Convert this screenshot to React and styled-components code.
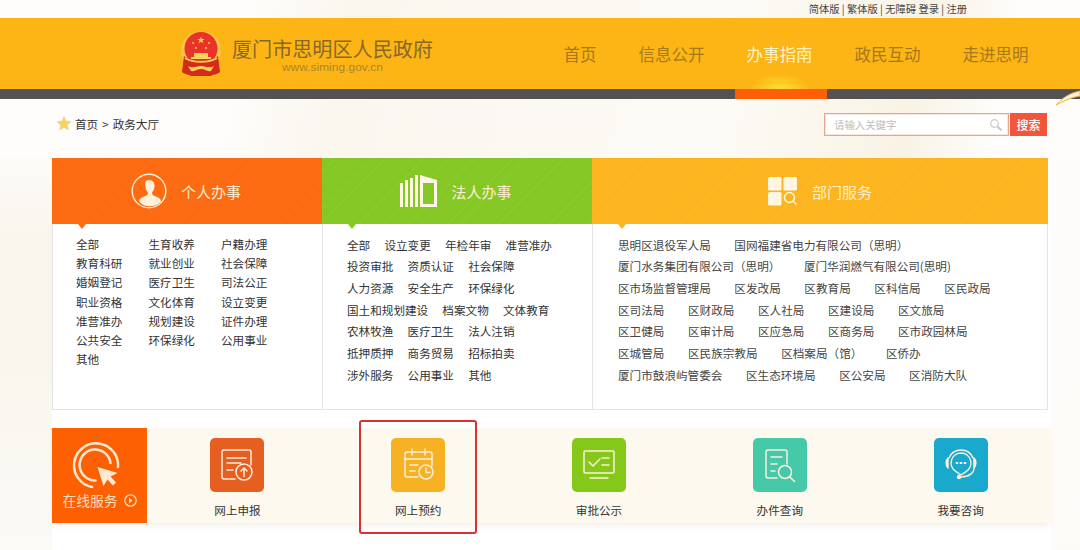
import React from 'react';
import styled, { createGlobalStyle } from 'styled-components';

const GlobalStyle = createGlobalStyle`
  html, body {
    margin: 0;
    padding: 0;
    height: 550px;
    overflow: hidden;
    background: #fff;
  }
  body {
    font-family: "Noto Sans CJK SC", "Liberation Sans", sans-serif;
    color: #333;
  }
`;

const Page = styled.div`
  position: relative;
  width: 1080px;
  height: 550px;
  overflow: hidden;
  background:
    linear-gradient(102deg, #fefdfb 22%, #fbf6ee 32%, #fdfbf6 66%, #f9f3e6 84%, #fefdfb 92%) 0 0 / 100% 158px no-repeat,
    linear-gradient(#fdfbf7, #f9f5ec 22%, #f9f6ee 55%, #fcfaf6) 0 158px / 52px 392px no-repeat,
    linear-gradient(#fdfcfa, #fcfbf8) 1051px 158px / 29px 392px no-repeat,
    #fff;
`;

const Swoosh = styled.svg`
  position: absolute;
  top: 90px;
  right: 0;
`;

const TopBar = styled.div`
  display: flex;
  justify-content: flex-end;
  align-items: center;
  height: 18px;
  padding-right: 113px;
  font-size: 10.3px;
  line-height: 16px;
  color: #444;
  white-space: pre;
`;

const Header = styled.header`
  display: flex;
  justify-content: space-between;
  height: 71px;
  padding: 0 51.5px 0 180px;
  background: #fdb515;
`;

const Logo = styled.div`
  display: flex;
  align-items: center;
  gap: 10px;
`;

const LogoText = styled.div`
  display: flex;
  flex-direction: column;
  align-items: center;
  padding-top: 3px;
`;

const Title = styled.div`
  font-size: 20.1px;
  line-height: 24px;
  color: #86692a;
  white-space: nowrap;
`;

const Url = styled.div`
  font-family: "Liberation Sans", sans-serif;
  font-size: 11.8px;
  line-height: 12px;
  letter-spacing: 0.1px;
  color: #a8862f;
`;

const Nav = styled.nav`
  display: flex;
  gap: 42px;
`;

const NavItem = styled.a`
  position: relative;
  display: flex;
  align-items: center;
  font-size: 16.5px;
  color: ${(p) => (p.$active ? '#fff2c9' : '#a5791c')};
  &::before {
    content: ${(p) => (p.$active ? "''" : 'none')};
    position: absolute;
    left: 2px;
    right: 2px;
    bottom: 0;
    height: 15px;
    background: radial-gradient(ellipse at 50% 100%, #ffe02c 0, rgba(255, 224, 44, 0) 70%);
  }
  &::after {
    content: ${(p) => (p.$active ? "''" : 'none')};
    position: absolute;
    left: -12px;
    right: -14px;
    bottom: -10px;
    height: 10px;
    background: #fc5f05;
  }
`;

const DarkBar = styled.div`
  height: 10px;
  background: #545252;
`;

const Main = styled.main`
  padding: 0 29px 0 52px;
`;

const CrumbRow = styled.div`
  display: flex;
  justify-content: space-between;
  align-items: center;
  height: 23px;
  padding: 14px 4px 22px 5px;
`;

const Crumbs = styled.div`
  display: flex;
  align-items: center;
  gap: 4px;
  margin-top: -2px;
  font-size: 11.6px;
  color: #333;
`;

const Search = styled.div`
  display: flex;
  gap: 1px;
`;

const SearchBox = styled.div`
  box-sizing: border-box;
  display: flex;
  justify-content: space-between;
  align-items: center;
  width: 185px;
  height: 23px;
  padding: 0 5px 0 9px;
  background: #fff;
  border: 1px solid #e5a58e;
  box-shadow: inset 0 0 0 1px #f8e6de;
  font-size: 10.4px;
  color: #bdbdbd;
`;

const SearchButton = styled.button`
  width: 37px;
  height: 23px;
  padding: 0;
  border: 0;
  background: #f4553a;
  color: #fff;
  font-family: inherit;
  font-size: 12px;
  font-weight: 500;
`;

const Panel = styled.section`
  display: grid;
  grid-template-columns: 270px 270px 456px;
  height: 252px;
`;

const Column = styled.div`
  display: flex;
  flex-direction: column;
  background: #fff;
  border: 1px solid #e3e3e3;
  border-width: 0 ${(p) => (p.$last ? '1px' : '0')} 1px ${(p) => (p.$first ? '1px' : '0')};
  box-sizing: border-box;
  & + & {
    border-left: 1px solid #e3e3e3;
  }
`;

const ColumnHead = styled.div`
  position: relative;
  flex: none;
  display: flex;
  justify-content: center;
  align-items: center;
  gap: 14px;
  height: 66px;
  padding-right: ${(p) => (p.$last ? '0' : '2px')};
  margin: 0 ${(p) => (p.$last ? '-1px' : '0')} 0 -1px;
  background:
    repeating-linear-gradient(135deg, rgba(255, 255, 255, 0.035) 0 1px, transparent 1px 9px),
    ${(p) => p.$color};
  font-size: 15px;
  color: #ffedcf;
  &::after {
    content: '';
    position: absolute;
    left: 26px;
    top: 100%;
    border: 4px solid transparent;
    border-top: 5px solid ${(p) => p.$color};
    border-bottom: 0;
  }
`;

const GridList = styled.div`
  display: grid;
  grid-template-columns: repeat(3, 72.5px);
  grid-auto-rows: 19.2px;
  padding: 11px 0 0 23px;
  font-size: 11.6px;
  line-height: 19.2px;
  color: #333;
`;

const RowList = styled.div`
  padding: 10.5px 0 0 ${(p) => p.$left}px;
  font-size: 11.6px;
  line-height: 21.7px;
  color: ${(p) => p.$color};
`;

const ListRow = styled.div`
  display: flex;
  gap: ${(p) => p.$gap}px;
  height: 21.7px;
  white-space: nowrap;
`;

const Services = styled.section`
  display: flex;
  width: 999px;
  height: 95px;
  margin-top: 18px;
  background: #fdf9ee;
  box-shadow: 0 5px 6px -2px rgba(120, 110, 90, 0.1);
`;

const ServiceBadge = styled.div`
  box-sizing: border-box;
  flex: none;
  display: flex;
  flex-direction: column;
  align-items: center;
  width: 95px;
  padding-top: 14px;
  background: #fc6000;
  color: #ffdcbc;
  font-size: 13.8px;
  line-height: 20px;
`;

const BadgeLabel = styled.div`
  display: flex;
  align-items: center;
  gap: 6px;
  margin-top: 2px;
  white-space: nowrap;
`;

const ServiceGrid = styled.div`
  flex: 1;
  display: grid;
  grid-template-columns: repeat(5, 1fr);
`;

const ServiceItem = styled.a`
  position: relative;
  display: flex;
  flex-direction: column;
  align-items: center;
  padding-top: 10px;
  font-size: 11.6px;
  line-height: 16px;
  color: #333;
  &::after {
    content: ${(p) => (p.$marked ? "''" : 'none')};
    position: absolute;
    top: -8px;
    left: 31px;
    right: 32px;
    bottom: -11px;
    border: 2px solid #d8322f;
    border-radius: 3px;
  }
`;

const Tile = styled.div`
  display: flex;
  justify-content: center;
  align-items: center;
  width: 54px;
  height: 54px;
  margin-bottom: 10px;
  border-radius: 5px;
  background: ${(p) => p.$color};
`;

const Emblem = () => (
  <svg width="42" height="46" viewBox="0 0 42 46">
    <circle cx="21" cy="20" r="20" fill="#f8c445" />
    <circle cx="21" cy="17.500" r="16.500" fill="#e8322a" />
    <path d="M21 5.500l.9 2.600h2.700l-2.200 1.600.9 2.700-2.300-1.700-2.300 1.700.9-2.700-2.200-1.600h2.700z" fill="#f9d448" />
    <circle cx="13" cy="12" r="1" fill="#f9d448" />
    <circle cx="29" cy="12" r="1" fill="#f9d448" />
    <circle cx="16" cy="17" r="1" fill="#f9d448" />
    <circle cx="26" cy="17" r="1" fill="#f9d448" />
    <path d="M11 26h20v2H11zM14 22h14v4H14z" fill="#f8d458" />
    <path d="M4 25c5 5 29 5 34 0l2 16c-3 3-7 2-9 4H11c-2-2-6-1-9-4z" fill="#d42a1c" />
    <path d="M8 35c6 3 8 0 13 0s7 3 13 0l-3 5c-4 1-6-2-10-2s-6 3-10 2z" fill="#f7cf58" />
    <path d="M5 27c8 5 24 5 32 0" fill="none" stroke="#f7cf58" strokeWidth="2" />
  </svg>
);

const Star = () => (
  <svg width="14" height="15" viewBox="0 0 14 15">
    <path d="M7 .5l2 4.600 5 .5-3.700 3.400 1 5L7 11.500 2.700 14l1-5L0 5.600l5-.5z" fill="#f9d35d" stroke="#e8c89a" strokeWidth=".5" />
  </svg>
);

const Magnifier = () => (
  <svg width="14" height="14" viewBox="0 0 14 14" fill="none" stroke="#c9c9c9">
    <circle cx="5.500" cy="5.500" r="3.800" strokeWidth="1.200" />
    <path d="M8.500 8.500l4 4" strokeWidth="2.200" />
  </svg>
);

const PersonIcon = () => (
  <svg width="36" height="36" viewBox="0 0 36 36">
    <circle cx="18" cy="18" r="16.800" fill="none" stroke="#fff1dc" strokeWidth="1.400" />
    <path d="M18 7c3.800 0 5.800 2.900 5.500 6.500-.2 2.400-1 4.200-2.300 5.600-.3 1.600 0 2.700 1.300 3.300 2.300 1 5.300 1.700 6.600 3.700.5.700.7 1.500.8 2.300A15.500 15.500 0 0 1 18 33.300 15.500 15.500 0 0 1 8.100 28.400c.1-.8.3-1.600.8-2.300 1.300-2 4.300-2.700 6.600-3.700 1.300-.6 1.600-1.700 1.300-3.300-1.300-1.400-2.100-3.200-2.300-5.600C14.200 9.900 14.200 7 18 7z" fill="#fff1dc" />
  </svg>
);

const HallIcon = () => (
  <svg width="37" height="32" viewBox="0 0 37 32" fill="#fff6e6">
    <rect x="0" y="8" width="3" height="24" />
    <rect x="5" y="5" width="3" height="27" />
    <rect x="10" y="3" width="3" height="29" />
    <rect x="15" y="0" width="3" height="32" />
    <path d="M20 0l17 5v27H20zM23 8v21h11V8z" fillRule="evenodd" />
  </svg>
);

const DeptIcon = () => (
  <svg width="30" height="30" viewBox="0 0 30 30">
    <rect x="0" y="1" width="13.500" height="13.500" rx="1.500" fill="#fff6e2" />
    <rect x="15.500" y="1" width="13.500" height="13.500" rx="1.500" fill="#fff6e2" />
    <rect x="0" y="16" width="13.500" height="13.500" rx="1.500" fill="#fff6e2" />
    <circle cx="21.500" cy="21.500" r="5" fill="none" stroke="#fff6e2" strokeWidth="1.500" />
    <path d="M25 25l3.500 3.500" stroke="#fff6e2" strokeWidth="1.500" />
  </svg>
);

const ClickIcon = () => (
  <svg width="56" height="46" viewBox="0 0 56 46" fill="none" stroke="#ffe9d2" strokeWidth="2.500" strokeLinecap="round">
    <path d="M46 25A22 22 0 1 0 20 45" />
    <path d="M38.500 21A15.500 15.500 0 1 0 23.500 38.500" />
    <path d="M25.500 25L45.500 31L38.500 34.500L44 40.500L41 43.500L35.500 37.500L31.500 44Z" fill="#ffe9d2" stroke="none" />
  </svg>
);

const CircleArrow = () => (
  <svg width="13" height="13" viewBox="0 0 13 13" fill="none">
    <circle cx="6.500" cy="6.500" r="5.700" stroke="#ffdcbc" strokeWidth="1.200" />
    <path d="M5 3.500l3.500 3-3.500 3z" fill="#ffdcbc" />
  </svg>
);

const IconSvg = styled.svg`
  width: 36px;
  height: 36px;
  fill: none;
  stroke: #fdeedd;
  stroke-width: 1.500;
  stroke-linecap: round;
  stroke-linejoin: round;
`;

const ReportIcon = () => (
  <IconSvg viewBox="0 0 36 36">
    <path d="M16 32H5a2 2 0 0 1-2-2V5a2 2 0 0 1 2-2h25a2 2 0 0 1 2 2v13" />
    <path d="M8 11h19M8 16h14M8 23h6" />
    <circle cx="25" cy="25" r="8" />
    <path d="M25 29.500v-8M22 24l3-3 3 3" />
  </IconSvg>
);

const BookingIcon = () => (
  <IconSvg viewBox="0 0 36 36">
    <path d="M18 30H7a2 2 0 0 1-2-2V7a2 2 0 0 1 2-2h23a2 2 0 0 1 2 2v12" />
    <path d="M5 12h27M12 2v6M25 2v6M10 18h8M10 24h5" />
    <circle cx="26" cy="25" r="7" />
    <path d="M26 21v4.500h4" />
  </IconSvg>
);

const ApprovalIcon = () => (
  <IconSvg viewBox="0 0 36 36">
    <rect x="3" y="4" width="30" height="22" rx="1" />
    <path d="M8 15l4 4 7-7M21 11h7M21 18h7M9 31h18" />
  </IconSvg>
);

const QueryIcon = () => (
  <IconSvg viewBox="0 0 36 36">
    <path d="M15 31H6a2 2 0 0 1-2-2V5a2 2 0 0 1 2-2h17a2 2 0 0 1 2 2v12" />
    <path d="M9 10h11M9 17h6M9 24h4" />
    <circle cx="23" cy="25" r="6.500" />
    <path d="M28 30l4.500 4.500" />
  </IconSvg>
);

const ConsultIcon = () => (
  <IconSvg viewBox="0 0 36 36">
    <path d="M6 11a13 13 0 0 1 24 0" />
    <path d="M18 6a10 10 0 0 1 5 18.600L18 28l-5-3.400A10 10 0 0 1 18 6z" />
    <path d="M13.500 16h1M17.500 16h1M21.500 16h1" strokeWidth="2" />
    <path d="M5 11c-2.500 2.500-2.500 7 0 10zM31 11c2.500 2.500 2.500 7 0 10z" fill="#fdeedd" />
    <path d="M31 21c0 5-5 9-13 9" />
    <circle cx="16" cy="30" r="1.500" fill="#fdeedd" />
  </IconSvg>
);

const personal = [
  '全部', '生育收养', '户籍办理',
  '教育科研', '就业创业', '社会保障',
  '婚姻登记', '医疗卫生', '司法公正',
  '职业资格', '文化体育', '设立变更',
  '准营准办', '规划建设', '证件办理',
  '公共安全', '环保绿化', '公用事业',
  '其他',
];

const legal = [
  ['全部', '设立变更', '年检年审', '准营准办'],
  ['投资审批', '资质认证', '社会保障'],
  ['人力资源', '安全生产', '环保绿化'],
  ['国土和规划建设', '档案文物', '文体教育'],
  ['农林牧渔', '医疗卫生', '法人注销'],
  ['抵押质押', '商务贸易', '招标拍卖'],
  ['涉外服务', '公用事业', '其他'],
];

const departments = [
  ['思明区退役军人局', '国网福建省电力有限公司（思明）'],
  ['厦门水务集团有限公司（思明）', '厦门华润燃气有限公司(思明)'],
  ['区市场监督管理局', '区发改局', '区教育局', '区科信局', '区民政局'],
  ['区司法局', '区财政局', '区人社局', '区建设局', '区文旅局'],
  ['区卫健局', '区审计局', '区应急局', '区商务局', '区市政园林局'],
  ['区城管局', '区民族宗教局', '区档案局（馆）', '区侨办'],
  ['厦门市鼓浪屿管委会', '区生态环境局', '区公安局', '区消防大队'],
];

const services = [
  { label: '网上申报', color: '#e65e20', Icon: ReportIcon },
  { label: '网上预约', color: '#f6b223', Icon: BookingIcon, marked: true },
  { label: '审批公示', color: '#86c81a', Icon: ApprovalIcon },
  { label: '办件查询', color: '#46c9a8', Icon: QueryIcon },
  { label: '我要咨询', color: '#19a9cc', Icon: ConsultIcon },
];

const navItems = ['首页', '信息公开', '办事指南', '政民互动', '走进思明'];

const App = () => (
  <Page>
    <GlobalStyle />
    <Swoosh width="24" height="18" viewBox="0 0 24 18">
      <path d="M0 15C6 8 14 3 24 1v5C16 7 8 11 0 15z" fill="#fdf3dc" stroke="#ecb648" strokeWidth="1" />
    </Swoosh>
    <TopBar>简体版 | 繁体版 | 无障碍 登录 | 注册</TopBar>
    <Header>
      <Logo>
        <Emblem />
        <LogoText>
          <Title>厦门市思明区人民政府</Title>
          <Url>www.siming.gov.cn</Url>
        </LogoText>
      </Logo>
      <Nav>
        {navItems.map((item) => (
          <NavItem key={item} $active={item === '办事指南'}>{item}</NavItem>
        ))}
      </Nav>
    </Header>
    <DarkBar />
    <Main>
      <CrumbRow>
        <Crumbs>
          <Star />
          <span>首页</span>
          <span>&gt;</span>
          <span>政务大厅</span>
        </Crumbs>
        <Search>
          <SearchBox>
            请输入关键字
            <Magnifier />
          </SearchBox>
          <SearchButton>搜索</SearchButton>
        </Search>
      </CrumbRow>
      <Panel>
        <Column $first>
          <ColumnHead $color="#fc6a12">
            <PersonIcon />
            个人办事
          </ColumnHead>
          <GridList>
            {personal.map((item) => <span key={item}>{item}</span>)}
          </GridList>
        </Column>
        <Column>
          <ColumnHead $color="#85c826">
            <HallIcon />
            法人办事
          </ColumnHead>
          <RowList $left={24} $color="#333">
            {legal.map((row) => (
              <ListRow key={row[0]} $gap={14.2}>
                {row.map((item) => <span key={item}>{item}</span>)}
              </ListRow>
            ))}
          </RowList>
        </Column>
        <Column $last>
          <ColumnHead $last $color="#fdb51f">
            <DeptIcon />
            部门服务
          </ColumnHead>
          <RowList $left={25} $color="#444">
            {departments.map((row) => (
              <ListRow key={row[0]} $gap={23.6}>
                {row.map((item) => <span key={item}>{item}</span>)}
              </ListRow>
            ))}
          </RowList>
        </Column>
      </Panel>
      <Services>
        <ServiceBadge>
          <ClickIcon />
          <BadgeLabel>
            在线服务
            <CircleArrow />
          </BadgeLabel>
        </ServiceBadge>
        <ServiceGrid>
          {services.map(({ label, color, Icon, marked }) => (
            <ServiceItem key={label} $marked={marked}>
              <Tile $color={color}><Icon /></Tile>
              {label}
            </ServiceItem>
          ))}
        </ServiceGrid>
      </Services>
    </Main>
  </Page>
);

export default App;
